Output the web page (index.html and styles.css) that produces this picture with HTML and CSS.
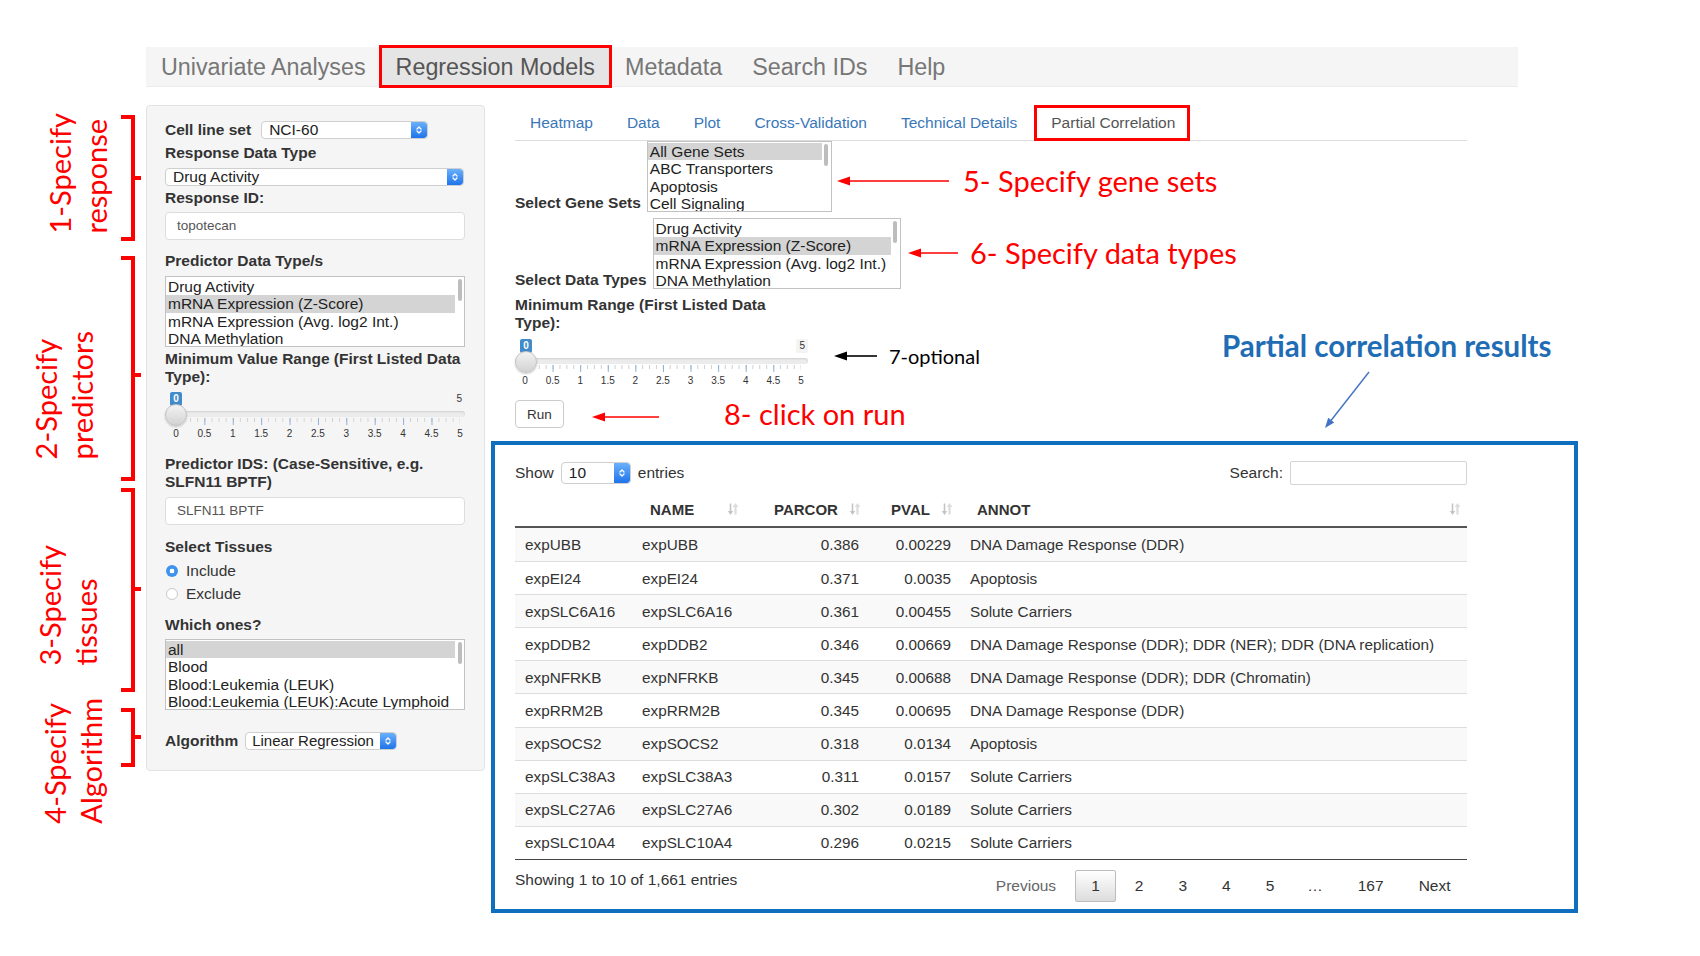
FILE: index.html
```html
<!DOCTYPE html>
<html lang="en">
<head>
<meta charset="utf-8">
<title>Regression Models - Partial Correlation</title>
<link rel="stylesheet" href="styles.css">
</head>
<body>
<svg class="defs" width="0" height="0" aria-hidden="true">
  <defs>
    <symbol id="chev" viewBox="0 0 8 12">
      <path d="M2 5 L4 3 L6 5 M2 7 L4 9 L6 7" fill="none" stroke="#fff" stroke-width="1.3" stroke-linecap="round" stroke-linejoin="round"/>
    </symbol>
    <symbol id="sort" viewBox="0 0 12 14">
      <path d="M3.5 1.5v8" stroke="#c4c4c4" stroke-width="1.6"/>
      <path d="M0.8 9h5.4L3.5 13z" fill="#c4c4c4"/>
      <path d="M8.5 12.5v-8" stroke="#dcdcdc" stroke-width="2.2"/>
      <path d="M5.6 5h5.8L8.5 1z" fill="#dcdcdc"/>
    </symbol>
  </defs>
</svg>

<div class="page">
  <nav class="navbar">
    <a class="nav-item">Univariate Analyses</a>
    <a class="nav-item active">Regression Models</a>
    <a class="nav-item">Metadata</a>
    <a class="nav-item">Search IDs</a>
    <a class="nav-item">Help</a>
  </nav>

  <div class="main">
    <aside class="sidebar">
      <div class="row-inline">
        <span class="lbl">Cell line set</span>
        <div class="select sel-cell"><span class="select-text">NCI-60</span><span class="select-btn"><svg><use href="#chev"/></svg></span></div>
      </div>
      <div class="lbl mt5">Response Data Type</div>
      <div class="select sel-full mt6"><span class="select-text">Drug Activity</span><span class="select-btn"><svg><use href="#chev"/></svg></span></div>
      <div class="lbl mt3">Response ID:</div>
      <div class="input mt5">topotecan</div>

      <div class="lbl mt12">Predictor Data Type/s</div>
      <div class="listbox lb-side mt6">
        <div class="lb-items">
          <div class="lb-item">Drug Activity</div>
          <div class="lb-item sel">mRNA Expression (Z-Score)</div>
          <div class="lb-item">mRNA Expression (Avg. log2 Int.)</div>
          <div class="lb-item">DNA Methylation</div>
        </div>
        <div class="lb-scroll"><span class="lb-thumb"></span></div>
      </div>
      <div class="lbl mt3">Minimum Value Range (First Listed Data Type):</div>
      <div class="slider slider-side mt3">
        <div class="slider-top"><span class="badge-min">0</span><span class="badge-max">5</span></div>
        <div class="slider-track"><span class="track-line"></span><span class="handle"></span></div>
        <div class="slider-ticks"></div>
        <div class="slider-labels"><span>0</span><span>0.5</span><span>1</span><span>1.5</span><span>2</span><span>2.5</span><span>3</span><span>3.5</span><span>4</span><span>4.5</span><span>5</span></div>
      </div>

      <div class="lbl mt14">Predictor IDS: (Case-Sensitive, e.g. SLFN11 BPTF)</div>
      <div class="input mt6">SLFN11 BPTF</div>

      <div class="lbl mt13">Select Tissues</div>
      <div class="radio mt6"><span class="radio-dot on"></span>Include</div>
      <div class="radio mt5"><span class="radio-dot"></span>Exclude</div>

      <div class="lbl mt13">Which ones?</div>
      <div class="listbox lb-side mt5">
        <div class="lb-items">
          <div class="lb-item sel">all</div>
          <div class="lb-item">Blood</div>
          <div class="lb-item">Blood:Leukemia (LEUK)</div>
          <div class="lb-item">Blood:Leukemia (LEUK):Acute Lymphoid</div>
        </div>
        <div class="lb-scroll"><span class="lb-thumb"></span></div>
      </div>

      <div class="row-inline mt22">
        <span class="lbl">Algorithm</span>
        <div class="select sel-algo"><span class="select-text">Linear Regression</span><span class="select-btn"><svg><use href="#chev"/></svg></span></div>
      </div>
    </aside>

    <section class="content">
      <ul class="tabs">
        <li class="tab">Heatmap</li>
        <li class="tab">Data</li>
        <li class="tab">Plot</li>
        <li class="tab">Cross-Validation</li>
        <li class="tab">Technical Details</li>
        <li class="tab active">Partial Correlation</li>
      </ul>

      <div class="field-row">
        <span class="lbl">Select Gene Sets</span>
        <div class="listbox lb-genes">
          <div class="lb-items">
            <div class="lb-item sel">All Gene Sets</div>
            <div class="lb-item">ABC Transporters</div>
            <div class="lb-item">Apoptosis</div>
            <div class="lb-item">Cell Signaling</div>
          </div>
          <div class="lb-scroll"><span class="lb-thumb"></span></div>
        </div>
      </div>
      <div class="field-row mt6">
        <span class="lbl">Select Data Types</span>
        <div class="listbox lb-types">
          <div class="lb-items">
            <div class="lb-item">Drug Activity</div>
            <div class="lb-item sel">mRNA Expression (Z-Score)</div>
            <div class="lb-item">mRNA Expression (Avg. log2 Int.)</div>
            <div class="lb-item">DNA Methylation</div>
          </div>
          <div class="lb-scroll"><span class="lb-thumb"></span></div>
        </div>
      </div>
      <div class="lbl lbl-range mt7">Minimum Range (First Listed Data Type):</div>
      <div class="slider slider-main mt4">
        <div class="slider-top"><span class="badge-min">0</span><span class="badge-max">5</span></div>
        <div class="slider-track"><span class="track-line"></span><span class="handle"></span></div>
        <div class="slider-ticks"></div>
        <div class="slider-labels"><span>0</span><span>0.5</span><span>1</span><span>1.5</span><span>2</span><span>2.5</span><span>3</span><span>3.5</span><span>4</span><span>4.5</span><span>5</span></div>
      </div>
      <button class="btn-run mt12">Run</button>

      <div class="dt mt33">
        <div class="dt-top">
          <div class="dt-length">Show
            <div class="select sel-len"><span class="select-text">10</span><span class="select-btn"><svg><use href="#chev"/></svg></span></div>
            entries</div>
          <div class="dt-search">Search: <span class="search-box"></span></div>
        </div>
        <table class="dt-table">
          <colgroup><col class="c1"><col class="c2"><col class="c3"><col class="c4"><col class="c5"></colgroup>
          <thead>
            <tr>
              <th></th>
              <th class="th-name"><div class="th-in"><span>NAME</span><svg class="sort"><use href="#sort"/></svg></div></th>
              <th class="th-parcor"><div class="th-in"><span>PARCOR</span><svg class="sort"><use href="#sort"/></svg></div></th>
              <th class="th-pval"><div class="th-in"><span>PVAL</span><svg class="sort"><use href="#sort"/></svg></div></th>
              <th class="th-annot"><div class="th-in"><span>ANNOT</span><svg class="sort"><use href="#sort"/></svg></div></th>
            </tr>
          </thead>
          <tbody>
            <tr><td>expUBB</td><td>expUBB</td><td class="num">0.386</td><td class="num">0.00229</td><td>DNA Damage Response (DDR)</td></tr>
            <tr><td>expEI24</td><td>expEI24</td><td class="num">0.371</td><td class="num">0.0035</td><td>Apoptosis</td></tr>
            <tr><td>expSLC6A16</td><td>expSLC6A16</td><td class="num">0.361</td><td class="num">0.00455</td><td>Solute Carriers</td></tr>
            <tr><td>expDDB2</td><td>expDDB2</td><td class="num">0.346</td><td class="num">0.00669</td><td>DNA Damage Response (DDR); DDR (NER); DDR (DNA replication)</td></tr>
            <tr><td>expNFRKB</td><td>expNFRKB</td><td class="num">0.345</td><td class="num">0.00688</td><td>DNA Damage Response (DDR); DDR (Chromatin)</td></tr>
            <tr><td>expRRM2B</td><td>expRRM2B</td><td class="num">0.345</td><td class="num">0.00695</td><td>DNA Damage Response (DDR)</td></tr>
            <tr><td>expSOCS2</td><td>expSOCS2</td><td class="num">0.318</td><td class="num">0.0134</td><td>Apoptosis</td></tr>
            <tr><td>expSLC38A3</td><td>expSLC38A3</td><td class="num">0.311</td><td class="num">0.0157</td><td>Solute Carriers</td></tr>
            <tr><td>expSLC27A6</td><td>expSLC27A6</td><td class="num">0.302</td><td class="num">0.0189</td><td>Solute Carriers</td></tr>
            <tr><td>expSLC10A4</td><td>expSLC10A4</td><td class="num">0.296</td><td class="num">0.0215</td><td>Solute Carriers</td></tr>
          </tbody>
        </table>
        <div class="dt-bottom">
          <div class="dt-info">Showing 1 to 10 of 1,661 entries</div>
          <div class="pager">
            <span class="pg pg-prev">Previous</span>
            <span class="pg current">1</span>
            <span class="pg">2</span>
            <span class="pg">3</span>
            <span class="pg">4</span>
            <span class="pg">5</span>
            <span class="pg-ellipsis">…</span>
            <span class="pg">167</span>
            <span class="pg">Next</span>
          </div>
        </div>
      </div>
    </section>
  </div>
</div>

<div class="overlay">
  <svg class="marks" width="1700" height="956" viewBox="0 0 1700 956">
    <g fill="none" stroke="#ff0000" stroke-width="4">
      <path d="M121 117 H133 V239 H121 M133 178 H141"/>
      <path d="M121 258 H133 V479 H121 M133 375 H141"/>
      <path d="M121 490 H133 V690 H121 M133 589 H141"/>
      <path d="M121 710 H133 V765 H121 M133 737 H141"/>
    </g>
    <g stroke="#ff0000" stroke-width="1.6">
      <line x1="848" y1="181" x2="949" y2="181"/>
      <line x1="919" y1="253" x2="958" y2="253"/>
      <line x1="603" y1="417" x2="659" y2="417"/>
    </g>
    <g fill="#ff0000">
      <polygon points="837,181 850,176.5 850,185.5"/>
      <polygon points="908,253 921,248.5 921,257.5"/>
      <polygon points="592,417 605,412.5 605,421.5"/>
    </g>
    <line x1="846" y1="356" x2="877" y2="356" stroke="#000" stroke-width="1.6"/>
    <polygon points="834,356 847,351.5 847,360.5" fill="#000"/>
    <line x1="1369" y1="372" x2="1331" y2="420.5" stroke="#4472c4" stroke-width="1.4"/>
    <polygon points="1325,428 1334.2,422.6 1328.2,417.8" fill="#4472c4"/>
  </svg>

  <div class="vlabel vl1">1-Specify<br>response</div>
  <div class="vlabel vl2">2-Specify<br>predictors</div>
  <div class="vlabel vl3">3-Specify<br>tissues</div>
  <div class="vlabel vl4">4-Specify<br>Algorithm</div>

  <div class="note note5">5- Specify gene sets</div>
  <div class="note note6">6- Specify data types</div>
  <div class="note note7">7-optional</div>
  <div class="note note8">8- click on run</div>
  <div class="note note-res">Partial correlation results</div>
  <div class="result-frame"></div>
</div>
</body>
</html>
```

FILE: styles.css
```css
* { box-sizing: border-box; }
html, body { margin: 0; padding: 0; }
body {
  width: 1700px;
  height: 956px;
  position: relative;
  overflow: hidden;
  background: #ffffff;
  font-family: "Liberation Sans", Arial, sans-serif;
  color: #333;
}
.defs { position: absolute; width: 0; height: 0; }

/* spacing helpers */
.mt3 { margin-top: 3px; }
.mt4 { margin-top: 4px; }
.mt5 { margin-top: 5px; }
.mt6 { margin-top: 6px; }
.mt7 { margin-top: 7px; }
.mt12 { margin-top: 12px; }
.mt13 { margin-top: 13px; }
.mt14 { margin-top: 14px; }
.mt22 { margin-top: 22px; }
.mt33 { margin-top: 33px; }

.page { padding: 47px 0 0 146px; }

/* top navbar */
.navbar {
  display: flex;
  width: 1372px;
  height: 40px;
  background: #f5f5f5;
  border-bottom: 1px solid #ececec;
}
.nav-item {
  padding: 0 15px;
  font-size: 23.3px;
  line-height: 40px;
  color: #777;
}
.nav-item.active {
  background: #e5e5e5;
  color: #555;
  outline: 3px solid #ff0000;
  outline-offset: -1px;
}

.main {
  display: flex;
  align-items: flex-start;
  gap: 30px;
  margin-top: 18px;
}

/* sidebar */
.sidebar {
  width: 339px;
  padding: 15px 19px 20px 18px;
  background: #f5f5f5;
  border: 1px solid #e3e3e3;
  border-radius: 4px;
}
.lbl {
  display: block;
  font-weight: bold;
  font-size: 15.5px;
  line-height: 18px;
  color: #333;
  white-space: normal;
}
.row-inline {
  display: flex;
  align-items: center;
  gap: 10px;
  height: 18px;
}
.row-inline .lbl { white-space: nowrap; }

/* select */
.select {
  display: flex;
  height: 18px;
  background: #fff;
  border: 1px solid #cfcfcf;
  border-radius: 4px;
  font-size: 15.5px;
  line-height: 16px;
  color: #222;
  overflow: hidden;
}
.select-text { flex: 1; padding-left: 7px; white-space: nowrap; overflow: hidden; }
.select-btn {
  width: 16px;
  flex: none;
  display: flex;
  align-items: center;
  justify-content: center;
  background: linear-gradient(#6bb0fb, #1f74ea);
  border-radius: 0 3px 3px 0;
}
.select-btn svg { width: 8px; height: 12px; }
.sel-cell { width: 167px; }
.sel-full { width: 299px; }
.sel-algo { width: 152px; margin-left: -3px; font-size: 15px; }
.sel-algo .select-text { padding-left: 6px; }
.sel-len { width: 70px; height: 22px; line-height: 20px; }

/* text input */
.input {
  height: 28px;
  width: 300px;
  background: #fff;
  border: 1px solid #ddd;
  border-radius: 4px;
  padding-left: 11px;
  font-size: 13.5px;
  line-height: 26px;
  color: #555;
}

/* listbox */
.listbox {
  display: flex;
  height: 71px;
  background: #fff;
  border: 1px solid #c2c2c2;
  overflow: hidden;
}
.lb-items { flex: 1; padding-top: 0.5px; min-width: 0; }
.lb-item {
  font-size: 15.5px;
  line-height: 17.5px;
  padding-left: 2px;
  color: #222;
  white-space: nowrap;
  overflow: hidden;
}
.lb-item.sel { background: #d4d4d4; }
.lb-scroll { width: 9px; display: flex; justify-content: center; padding-top: 2px; }
.lb-thumb { width: 4px; height: 22px; border-radius: 3px; background: #bdbdbd; }
.lb-side { width: 300px; }
.lb-genes { width: 185px; }
.lb-types { width: 248px; }

/* slider */
.slider { position: relative; }
.slider-side { width: 300px; }
.slider-main { width: 293px; }
.slider-top {
  height: 17px;
  display: flex;
  justify-content: space-between;
  align-items: flex-start;
  padding-top: 3px;
}
.badge-min {
  margin-left: 5px;
  min-width: 12px;
  height: 14px;
  padding: 0 3px;
  background: #428bca;
  border-radius: 2px;
  color: #fff;
  font-size: 10px;
  font-weight: bold;
  line-height: 14px;
  text-align: center;
}
.badge-max {
  height: 14px;
  padding: 0 3px;
  background: #f4f4f4;
  border-radius: 2px;
  color: #333;
  font-size: 10px;
  line-height: 14px;
}
.slider-track { height: 11px; position: relative; }
.track-line {
  position: absolute;
  left: 0; right: 0; top: 5px;
  height: 6px;
  border-radius: 3px;
  background: #ececec;
  box-shadow: inset 0 1px 2px rgba(0,0,0,0.12);
}
.handle {
  position: absolute;
  left: 0; top: -2px;
  width: 22px; height: 22px;
  border-radius: 50%;
  background: linear-gradient(#f3f3f3, #d2d2d2);
  border: 1px solid #c4c4c4;
  box-shadow: 0 1px 2px rgba(0,0,0,0.2);
}
.slider-ticks {
  height: 8px;
  margin: 0 5px 0 11px;
  background:
    linear-gradient(to right, #8fb0d4 0 1px, transparent 1px) 0 1px / 28.4px 7px repeat-x,
    linear-gradient(to right, #cfcfcf 0 1px, transparent 1px) 0 1px / 7.1px 4px repeat-x;
}
.slider-main .slider-ticks { margin: 0 7px 0 10px; background-size: 27.6px 7px, 6.9px 4px; }
.slider-labels {
  display: flex;
  justify-content: space-between;
  margin: 2px -5px 0 1px;
  font-size: 10px;
  line-height: 14px;
  color: #333;
}
.slider-main .slider-labels { margin: 2px -3px 0 0; }
.slider-labels span { width: 20px; text-align: center; }

/* radios */
.radio {
  display: flex;
  align-items: center;
  gap: 8px;
  height: 18px;
  font-size: 15.5px;
  color: #333;
}
.radio-dot {
  width: 12px; height: 12px;
  border-radius: 50%;
  background: #fff;
  border: 1px solid #c9c9c9;
  margin-left: 1px;
}
.radio-dot.on {
  border: none;
  background: radial-gradient(circle, #fff 0 2.2px, #3f93ef 2.6px);
}

/* content column */
.content { width: 952px; }
.tabs {
  list-style: none;
  margin: 0;
  padding: 0;
  display: flex;
  height: 36px;
  border-bottom: 1px solid #ddd;
}
.tab {
  padding: 0 17px;
  font-size: 15.5px;
  line-height: 35px;
  color: #3a77b8;
}
.tab:first-child { padding-left: 15px; }
.tab.active {
  padding: 0 12px 0 14px;
  line-height: 30px;
  color: #555;
  background: #fff;
  border: 3px solid #ff0000;
  height: 36px;
}

.field-row {
  display: flex;
  align-items: flex-end;
  gap: 6px;
}
.field-row .lbl { white-space: nowrap; }
.lbl-range { width: 285px; }

.btn-run {
  display: block;
  width: 49px;
  height: 28px;
  padding: 0;
  background: #fff;
  border: 1px solid #ccc;
  border-radius: 4px;
  font-family: "Liberation Sans", Arial, sans-serif;
  font-size: 13.5px;
  color: #333;
}

/* data table */
.dt { width: 952px; }
.dt-top {
  display: flex;
  justify-content: space-between;
  align-items: center;
  height: 24px;
  font-size: 15.5px;
}
.dt-length { display: flex; align-items: center; gap: 7px; }
.dt-search { display: flex; align-items: center; gap: 7px; }
.search-box {
  width: 177px;
  height: 24px;
  border: 1px solid #d5d5d5;
  border-radius: 2px;
  background: #fff;
}
.dt-table {
  margin-top: 7px;
  width: 952px;
  table-layout: fixed;
  border-collapse: separate;
  border-spacing: 0;
  font-size: 15.3px;
  color: #333;
}
.c1 { width: 117px; }
.c2 { width: 122px; }
.c3 { width: 115px; }
.c4 { width: 92px; }
.c5 { width: 506px; }
.dt-table th {
  height: 36px;
  padding: 0 8px 0 18px;
  text-align: left;
  font-size: 15px;
  font-weight: bold;
  border-bottom: 2px solid #555;
}
.dt-table th.th-name { padding-right: 15px; }
.dt-table th.th-parcor { padding-left: 20px; }
.dt-table th.th-pval { padding-left: 22px; }
.dt-table th.th-annot { padding-left: 16px; padding-right: 6px; }
.th-in { display: flex; justify-content: space-between; align-items: center; }
.sort { width: 12px; height: 14px; }
.dt-table td {
  padding: 7.55px 10px;
  line-height: 17px;
  border-top: 1px solid #ddd;
  white-space: nowrap;
}
.dt-table tbody tr:first-child td { border-top: none; height: 33.1px; }
.dt-table tbody tr:nth-child(odd) td { background: #f9f9f9; }
.dt-table tbody tr:last-child td { border-bottom: 1px solid #444; }
.dt-table td.num { text-align: right; }
.dt-table td:last-child { padding-left: 9px; }

.dt-bottom {
  display: flex;
  justify-content: space-between;
  align-items: flex-start;
  margin-top: 10px;
}
.dt-info { font-size: 15.5px; line-height: 18px; padding-top: 1px; }
.pager { display: flex; align-items: center; }
.pg {
  height: 32px;
  padding: 0 15.5px;
  margin-left: 2px;
  border: 1px solid transparent;
  border-radius: 2px;
  font-size: 15.5px;
  line-height: 30px;
  color: #333;
}
.pg-prev { color: #666; }
.pg.current {
  background: linear-gradient(#ffffff, #dcdcdc);
  border-color: #bdbdbd;
}
.pg-ellipsis { padding: 0 16.5px; font-size: 15.5px; color: #333; }

/* annotation overlay */
.overlay {
  position: absolute;
  left: 0; top: 0;
  width: 1700px; height: 956px;
  pointer-events: none;
}
.marks { position: absolute; left: 0; top: 0; }
.vlabel {
  position: absolute;
  writing-mode: vertical-rl;
  transform: rotate(180deg);
  font-family: Lato, "Open Sans", sans-serif;
  font-size: 29px;
  line-height: 36px;
  color: #f00;
  white-space: nowrap;
}
.vl1 { left: 42px; bottom: 723px; }
.vl2 { left: 28px; bottom: 497px; }
.vl3 { left: 32px; bottom: 291px; }
.vl4 { left: 37px; bottom: 132px; }

.note {
  position: absolute;
  font-family: Lato, "Open Sans", sans-serif;
  white-space: nowrap;
}
.note5 { left: 963px; top: 163px; font-size: 29px; line-height: 36px; color: #f00; }
.note6 { left: 970px; top: 235px; font-size: 29px; line-height: 36px; color: #f00; }
.note7 { left: 889px; top: 343px; font-size: 20px; line-height: 26px; color: #000; }
.note8 { left: 724px; top: 396px; font-size: 29px; line-height: 36px; color: #f00; }
.note-res { left: 1222px; top: 329px; font-size: 29.5px; line-height: 34px; font-weight: bold; color: #1f6db5; }

.result-frame {
  position: absolute;
  left: 491px; top: 441px;
  width: 1087px; height: 472px;
  border: 4px solid #0f6fbe;
}
```
